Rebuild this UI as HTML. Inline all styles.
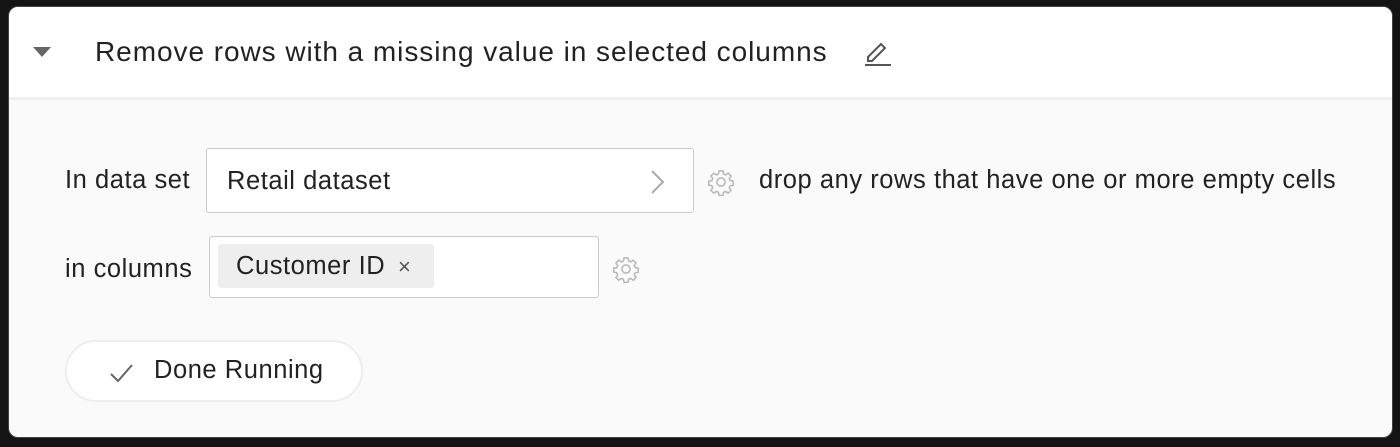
<!DOCTYPE html>
<html><head><style>
html,body{margin:0;padding:0;width:1400px;height:447px;background:#141414;overflow:hidden;font-family:"Liberation Sans",sans-serif;color:#222;}
.card{position:absolute;left:8px;top:6px;width:1385px;height:432px;background:#fafafa;border-radius:10px;overflow:hidden;border:1px solid #444;box-sizing:border-box;}
.head{position:absolute;left:0;top:0;right:0;height:90px;background:#fff;border-bottom:3px solid #efefef;}
.tri{position:absolute;left:24px;top:40px;width:0;height:0;border-left:9px solid transparent;border-right:9px solid transparent;border-top:10px solid #666;}
.title{position:absolute;left:86px;top:29px;font-size:28px;letter-spacing:0.95px;color:#222;white-space:nowrap;}
.t{position:absolute;font-size:25.5px;letter-spacing:0.55px;color:#222;white-space:nowrap;}
.box{position:absolute;background:#fff;border:1px solid #ccc;border-radius:3px;box-sizing:border-box;}
.chip{position:absolute;left:8px;top:7px;height:44px;width:216px;background:#eee;border-radius:3px;}
.btn{position:absolute;left:56px;top:333px;width:298px;height:62px;border:2px solid #eee;border-radius:32px;background:#fff;box-sizing:border-box;}
</style></head><body>
<div class="card">
<div class="head">
<div class="tri"></div>
<div class="title">Remove rows with a missing value in selected columns</div>
<svg style="position:absolute;left:853px;top:30px" width="32" height="30" viewBox="0 0 32 30"><path d="M6 20 L19 7 L23 11 L10 24 L6 24 Z" fill="none" stroke="#555" stroke-width="2"/><line x1="3" y1="28" x2="29" y2="28" stroke="#555" stroke-width="2"/></svg>
</div>
<div class="t" style="left:56px;top:159px">In data set</div>
<div class="box" style="left:197px;top:141px;width:488px;height:65px"><span class="t" style="left:20px;top:18px">Retail dataset</span>
<svg style="position:absolute;left:443px;top:20px" width="16" height="26" viewBox="0 0 16 26"><path d="M2 2 L13 13 L2 24" fill="none" stroke="#aaa" stroke-width="2"/></svg></div>
<svg style="position:absolute;left:698px;top:161px" width="28" height="28" viewBox="0 0 24 24"><g fill="none" stroke="#bbb" stroke-width="1.4"><path d="M10.3 2.5h3.4l.5 2.6 1.8.8 2.2-1.5 2.4 2.4-1.5 2.2.8 1.8 2.6.5v3.4l-2.6.5-.8 1.8 1.5 2.2-2.4 2.4-2.2-1.5-1.8.8-.5 2.6h-3.4l-.5-2.6-1.8-.8-2.2 1.5-2.4-2.4 1.5-2.2-.8-1.8-2.6-.5v-3.4l2.6-.5.8-1.8-1.5-2.2 2.4-2.4 2.2 1.5 1.8-.8z"/><circle cx="12" cy="12" r="3.5"/></g></svg>
<div class="t" style="left:750px;top:159px">drop any rows that have one or more empty cells</div>
<div class="t" style="left:56px;top:248px">in columns</div>
<div class="box" style="left:200px;top:229px;width:390px;height:62px"><div class="chip"><span class="t" style="left:18px;top:8px">Customer ID</span><span class="t" style="left:180px;top:10px;font-size:22px;color:#555">×</span></div></div>
<svg style="position:absolute;left:603px;top:248px" width="28" height="28" viewBox="0 0 24 24"><g fill="none" stroke="#bbb" stroke-width="1.4"><path d="M10.3 2.5h3.4l.5 2.6 1.8.8 2.2-1.5 2.4 2.4-1.5 2.2.8 1.8 2.6.5v3.4l-2.6.5-.8 1.8 1.5 2.2-2.4 2.4-2.2-1.5-1.8.8-.5 2.6h-3.4l-.5-2.6-1.8-.8-2.2 1.5-2.4-2.4 1.5-2.2-.8-1.8-2.6-.5v-3.4l2.6-.5.8-1.8-1.5-2.2 2.4-2.4 2.2 1.5 1.8-.8z"/><circle cx="12" cy="12" r="3.5"/></g></svg>
<div class="btn">
<svg style="position:absolute;left:42px;top:20px" width="26" height="22" viewBox="0 0 26 22"><path d="M2 12 L9 19 L23 3" fill="none" stroke="#666" stroke-width="2"/></svg>
<span class="t" style="left:87px;top:14px">Done Running</span></div>
</div>
</body></html>
